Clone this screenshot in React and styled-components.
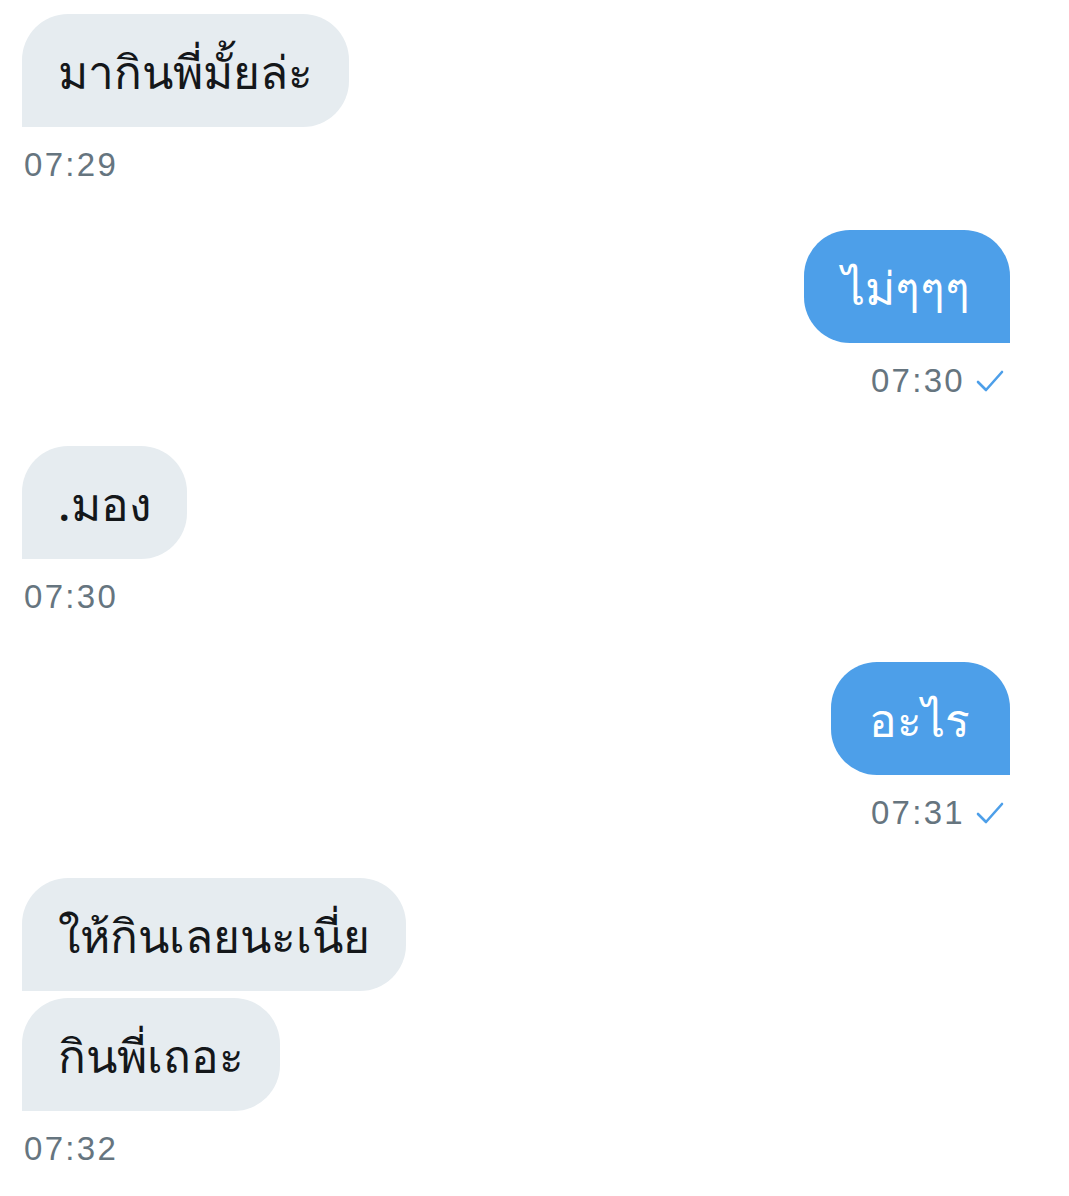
import React from 'react';
import styled, { createGlobalStyle } from 'styled-components';

const GlobalStyle = createGlobalStyle`
  html, body {
    margin: 0;
    padding: 0;
    background: #ffffff;
  }
  body {
    font-family: "Noto Sans", "Liberation Sans", sans-serif;
  }
`;

const Thread = styled.div`
  display: flex;
  flex-direction: column;
  gap: 45px;
  padding: 14px 59px 20px 22px;
`;

const Group = styled.div`
  display: flex;
  flex-direction: column;
  align-items: ${props => (props.$mine ? 'flex-end' : 'flex-start')};
  gap: 7px;
`;

const Bubble = styled.div`
  height: 113px;
  box-sizing: border-box;
  display: flex;
  align-items: center;
  padding: 0 ${props => (props.$mine ? '40px 0 38px' : '36px')};
  font-size: 46px;
  font-weight: 500;
  line-height: 1;
  white-space: nowrap;
  color: ${props => (props.$mine ? '#ffffff' : '#14171a')};
  background: ${props => (props.$mine ? '#4d9fe9' : '#e6ecf0')};
  border-radius: ${props => (props.$mine ? '46px 46px 0 46px' : '46px 46px 46px 0')};
`;

const Meta = styled.div`
  display: flex;
  align-items: center;
  gap: 11px;
  margin-top: 11px;
  height: 40px;
  padding-right: ${props => (props.$mine ? '6px' : '0')};
  padding-left: ${props => (props.$mine ? '0' : '2px')};
  font-family: "Liberation Sans", Arial, sans-serif;
  font-size: 33px;
  letter-spacing: 2.3px;
  color: #66757f;
`;

const Check = () => (
  <svg width="28" height="24" viewBox="0 0 28 24" fill="none">
    <polyline
      points="2,13 10,21 26,3"
      stroke="#4d9fe9"
      strokeWidth="2.6"
      strokeLinecap="round"
      strokeLinejoin="round"
    />
  </svg>
);

const messages = [
  { mine: false, texts: ['มากินพี่มั้ยล่ะ'], time: '07:29' },
  { mine: true, texts: ['ไม่ๆๆๆ'], time: '07:30' },
  { mine: false, texts: ['.มอง'], time: '07:30' },
  { mine: true, texts: ['อะไร'], time: '07:31' },
  { mine: false, texts: ['ให้กินเลยนะเนี่ย', 'กินพี่เถอะ'], time: '07:32' },
];

export default function App() {
  return (
    <>
      <GlobalStyle />
      <Thread>
        {messages.map((m, i) => (
          <Group key={i} $mine={m.mine}>
            {m.texts.map((t, j) => (
              <Bubble key={j} $mine={m.mine}>{t}</Bubble>
            ))}
            <Meta $mine={m.mine}>
              <span>{m.time}</span>
              {m.mine && <Check />}
            </Meta>
          </Group>
        ))}
      </Thread>
    </>
  );
}
